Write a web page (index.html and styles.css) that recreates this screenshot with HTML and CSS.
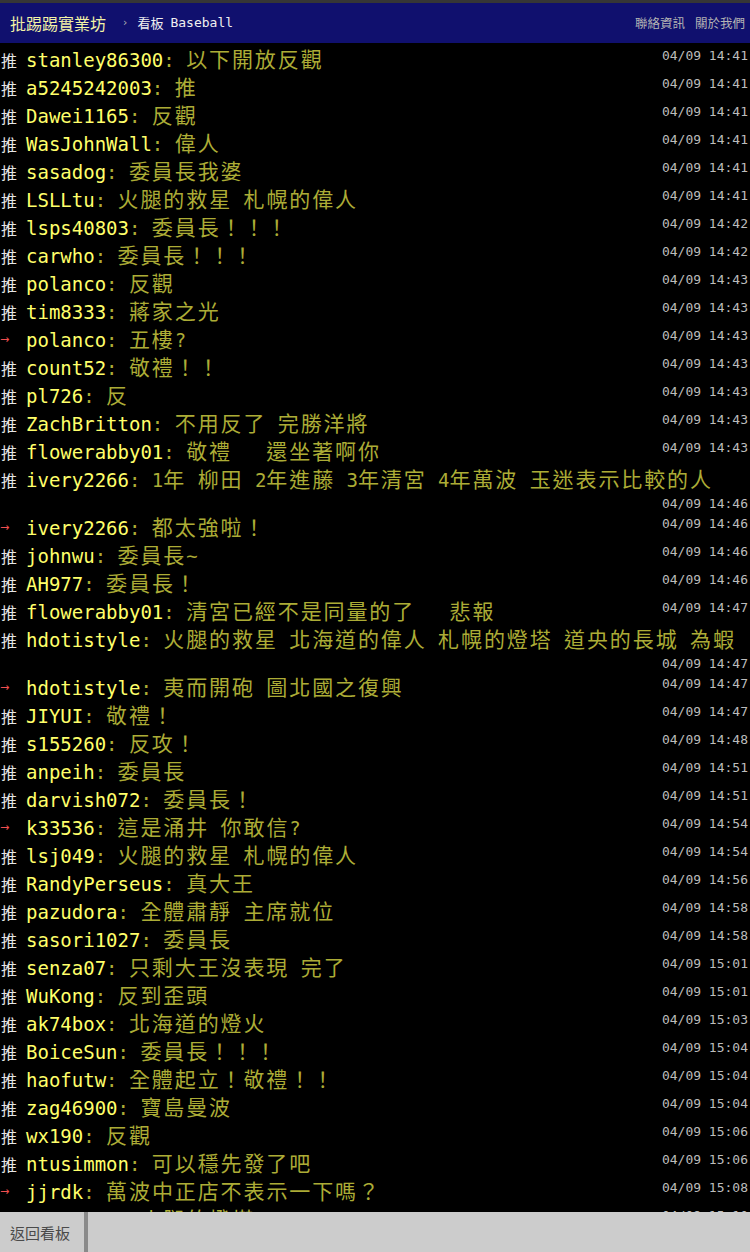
FILE: index.html
```html
<!DOCTYPE html>
<html lang="zh-Hant">
<head>
<meta charset="utf-8">
<title>Baseball - 批踢踢實業坊</title>
<link rel="stylesheet" href="styles.css">
</head>
<body>
<header class="topbar">
  <span class="logo">批踢踢實業坊</span>
  <span class="sep">›</span>
  <span class="board-cjk">看板</span>
  <span class="board">Baseball</span>
  <nav class="links"><span>聯絡資訊</span><span>關於我們</span></nav>
</header>
<main class="content">
<div class="push"><span class="tag">推</span><span class="uid">stanley86300</span><span class="txt">: <span class="c">以下開放反觀</span></span><span class="time">04/09 14:41</span></div>
<div class="push"><span class="tag">推</span><span class="uid">a5245242003</span><span class="txt">: <span class="c">推</span></span><span class="time">04/09 14:41</span></div>
<div class="push"><span class="tag">推</span><span class="uid">Dawei1165</span><span class="txt">: <span class="c">反觀</span></span><span class="time">04/09 14:41</span></div>
<div class="push"><span class="tag">推</span><span class="uid">WasJohnWall</span><span class="txt">: <span class="c">偉人</span></span><span class="time">04/09 14:41</span></div>
<div class="push"><span class="tag">推</span><span class="uid">sasadog</span><span class="txt">: <span class="c">委員長我婆</span></span><span class="time">04/09 14:41</span></div>
<div class="push"><span class="tag">推</span><span class="uid">LSLLtu</span><span class="txt">: <span class="c">火腿的救星</span> <span class="c">札幌的偉人</span></span><span class="time">04/09 14:41</span></div>
<div class="push"><span class="tag">推</span><span class="uid">lsps40803</span><span class="txt">: <span class="c">委員長！！！</span></span><span class="time">04/09 14:42</span></div>
<div class="push"><span class="tag">推</span><span class="uid">carwho</span><span class="txt">: <span class="c">委員長！！！</span></span><span class="time">04/09 14:42</span></div>
<div class="push"><span class="tag">推</span><span class="uid">polanco</span><span class="txt">: <span class="c">反觀</span></span><span class="time">04/09 14:43</span></div>
<div class="push"><span class="tag">推</span><span class="uid">tim8333</span><span class="txt">: <span class="c">蔣家之光</span></span><span class="time">04/09 14:43</span></div>
<div class="push"><span class="tag arrow">→</span><span class="uid">polanco</span><span class="txt">: <span class="c">五樓</span>?</span><span class="time">04/09 14:43</span></div>
<div class="push"><span class="tag">推</span><span class="uid">count52</span><span class="txt">: <span class="c">敬禮！！</span></span><span class="time">04/09 14:43</span></div>
<div class="push"><span class="tag">推</span><span class="uid">pl726</span><span class="txt">: <span class="c">反</span></span><span class="time">04/09 14:43</span></div>
<div class="push"><span class="tag">推</span><span class="uid">ZachBritton</span><span class="txt">: <span class="c">不用反了</span> <span class="c">完勝洋將</span></span><span class="time">04/09 14:43</span></div>
<div class="push"><span class="tag">推</span><span class="uid">flowerabby01</span><span class="txt">: <span class="c">敬禮</span>   <span class="c">還坐著啊你</span></span><span class="time">04/09 14:43</span></div>
<div class="push"><span class="tag">推</span><span class="uid">ivery2266</span><span class="txt">: 1<span class="c">年</span> <span class="c">柳田</span> 2<span class="c">年進藤</span> 3<span class="c">年清宮</span> 4<span class="c">年萬波</span> <span class="c">玉迷表示比較的人</span></span><span class="time">04/09 14:46</span></div>
<div class="push"><span class="tag arrow">→</span><span class="uid">ivery2266</span><span class="txt">: <span class="c">都太強啦！</span></span><span class="time">04/09 14:46</span></div>
<div class="push"><span class="tag">推</span><span class="uid">johnwu</span><span class="txt">: <span class="c">委員長</span>~</span><span class="time">04/09 14:46</span></div>
<div class="push"><span class="tag">推</span><span class="uid">AH977</span><span class="txt">: <span class="c">委員長！</span></span><span class="time">04/09 14:46</span></div>
<div class="push"><span class="tag">推</span><span class="uid">flowerabby01</span><span class="txt">: <span class="c">清宮已經不是同量的了</span>   <span class="c">悲報</span></span><span class="time">04/09 14:47</span></div>
<div class="push"><span class="tag">推</span><span class="uid">hdotistyle</span><span class="txt">: <span class="c">火腿的救星</span> <span class="c">北海道的偉人</span> <span class="c">札幌的燈塔</span> <span class="c">道央的長城</span> <span class="c">為蝦</span></span><span class="time">04/09 14:47</span></div>
<div class="push"><span class="tag arrow">→</span><span class="uid">hdotistyle</span><span class="txt">: <span class="c">夷而開砲</span> <span class="c">圖北國之復興</span></span><span class="time">04/09 14:47</span></div>
<div class="push"><span class="tag">推</span><span class="uid">JIYUI</span><span class="txt">: <span class="c">敬禮！</span></span><span class="time">04/09 14:47</span></div>
<div class="push"><span class="tag">推</span><span class="uid">s155260</span><span class="txt">: <span class="c">反攻！</span></span><span class="time">04/09 14:48</span></div>
<div class="push"><span class="tag">推</span><span class="uid">anpeih</span><span class="txt">: <span class="c">委員長</span></span><span class="time">04/09 14:51</span></div>
<div class="push"><span class="tag">推</span><span class="uid">darvish072</span><span class="txt">: <span class="c">委員長！</span></span><span class="time">04/09 14:51</span></div>
<div class="push"><span class="tag arrow">→</span><span class="uid">k33536</span><span class="txt">: <span class="c">這是涌井</span> <span class="c">你敢信</span>?</span><span class="time">04/09 14:54</span></div>
<div class="push"><span class="tag">推</span><span class="uid">lsj049</span><span class="txt">: <span class="c">火腿的救星</span> <span class="c">札幌的偉人</span></span><span class="time">04/09 14:54</span></div>
<div class="push"><span class="tag">推</span><span class="uid">RandyPerseus</span><span class="txt">: <span class="c">真大王</span></span><span class="time">04/09 14:56</span></div>
<div class="push"><span class="tag">推</span><span class="uid">pazudora</span><span class="txt">: <span class="c">全體肅靜</span> <span class="c">主席就位</span></span><span class="time">04/09 14:58</span></div>
<div class="push"><span class="tag">推</span><span class="uid">sasori1027</span><span class="txt">: <span class="c">委員長</span></span><span class="time">04/09 14:58</span></div>
<div class="push"><span class="tag">推</span><span class="uid">senza07</span><span class="txt">: <span class="c">只剩大王沒表現</span> <span class="c">完了</span></span><span class="time">04/09 15:01</span></div>
<div class="push"><span class="tag">推</span><span class="uid">WuKong</span><span class="txt">: <span class="c">反到歪頭</span></span><span class="time">04/09 15:01</span></div>
<div class="push"><span class="tag">推</span><span class="uid">ak74box</span><span class="txt">: <span class="c">北海道的燈火</span></span><span class="time">04/09 15:03</span></div>
<div class="push"><span class="tag">推</span><span class="uid">BoiceSun</span><span class="txt">: <span class="c">委員長！！！</span></span><span class="time">04/09 15:04</span></div>
<div class="push"><span class="tag">推</span><span class="uid">haofutw</span><span class="txt">: <span class="c">全體起立！敬禮！！</span></span><span class="time">04/09 15:04</span></div>
<div class="push"><span class="tag">推</span><span class="uid">zag46900</span><span class="txt">: <span class="c">寶島曼波</span></span><span class="time">04/09 15:04</span></div>
<div class="push"><span class="tag">推</span><span class="uid">wx190</span><span class="txt">: <span class="c">反觀</span></span><span class="time">04/09 15:06</span></div>
<div class="push"><span class="tag">推</span><span class="uid">ntusimmon</span><span class="txt">: <span class="c">可以穩先發了吧</span></span><span class="time">04/09 15:06</span></div>
<div class="push"><span class="tag arrow">→</span><span class="uid">jjrdk</span><span class="txt">: <span class="c">萬波中正店不表示一下嗎？</span></span><span class="time">04/09 15:08</span></div>
<div class="push"><span class="tag">推</span><span class="uid">yusukeid</span><span class="txt">: <span class="c">火腿的燈塔</span></span><span class="time">04/09 15:10</span></div>
<div class="push"><span class="tag">推</span><span class="uid">pazudora</span><span class="txt">: <span class="c">委員長</span></span><span class="time">04/09 15:12</span></div>
</main>
<footer class="bottombar">
  <a class="back">返回看板</a>
</footer>
</body>
</html>
```
FILE: styles.css
```css
* { box-sizing: border-box; }
html, body { margin: 0; padding: 0; background: #000; }
body {
  width: 750px;
  font-family: "DejaVu Sans Mono", "Noto Sans CJK TC", monospace;
}

/* top bar */
.topbar {
  position: fixed;
  top: 0; left: 0; right: 0;
  height: 43px;
  border-top: 3px solid #363636;
  background: #10106e;
  display: flex;
  align-items: center;
  padding: 0 5px 0 10px;
  z-index: 2;
  line-height: 20px;
}
.logo {
  font-family: "Noto Sans CJK TC", sans-serif;
  font-size: 16px;
  color: #f2f2a6;
}
.sep {
  color: #b0b0b0;
  font-family: "DejaVu Sans", sans-serif;
  font-size: 11px;
  margin: 0 10px 0 17px;
}
.board-cjk {
  color: #f0f0f0;
  font-family: "Noto Sans CJK TC", sans-serif;
  font-size: 13px;
  margin-right: 7px;
}
.board {
  color: #f0f0f0;
  font-family: "DejaVu Sans Mono", monospace;
  font-size: 13px;
}
.links {
  margin-left: auto;
  display: flex;
  gap: 10px;
  font-family: "Noto Sans CJK TC", sans-serif;
  font-size: 12.5px;
  color: #b4b4b4;
}

/* push list */
.content { padding: 46px 2px 60px 0; }
.push {
  font-size: 19px;
  line-height: 28px;
  white-space: pre-wrap;
}
.push::after { content: ""; display: block; clear: both; }
.tag {
  display: inline-block;
  vertical-align: top;
  width: 26px;
  height: 28px;
  line-height: 28px;
  padding-left: 1px;
  font-family: "Noto Sans CJK TC", sans-serif;
  font-size: 16px;
  color: #e6e6e6;
}
.tag.arrow {
  font-family: "DejaVu Sans", sans-serif;
  font-size: 11px;
  color: #f05050;
  padding-left: 0;
}
.uid { color: #ffff6a; }
.txt { color: #acac36; }
.c {
  font-family: "Noto Sans CJK TC", sans-serif;
  font-size: 21px;
  line-height: 20px;
  letter-spacing: 1.9px;
}
.time {
  float: right;
  font-size: 13px;
  line-height: 20px;
  color: #bcbcbc;
}

/* bottom bar */
.bottombar {
  position: fixed;
  left: 0; right: 0; bottom: 0;
  height: 40px;
  background: #cccccc;
  display: flex;
  z-index: 2;
}
.back {
  width: 88px;
  border-right: 4px solid #8a8a8a;
  display: flex;
  align-items: center;
  justify-content: center;
  padding-right: 4px;
  font-family: "Noto Sans CJK TC", sans-serif;
  font-size: 15px;
  color: #4a4a4a;
}
```
